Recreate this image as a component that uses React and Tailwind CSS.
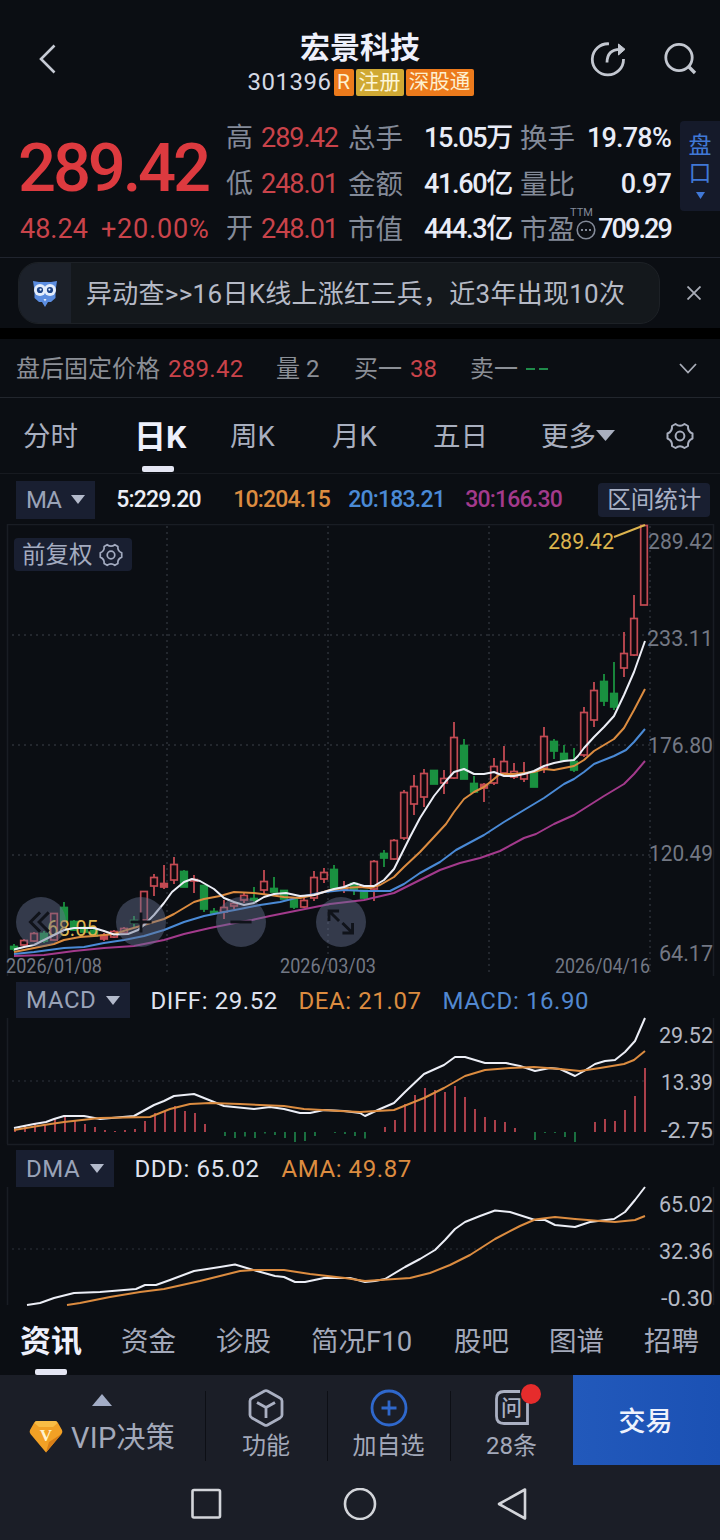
import clsx from "clsx";

// [top, bottom, high, low, direction] in chart pixels, one entry per trading day
const candles = [
  [946, 949, 944, 951, "g"], [940, 945, 939, 946, "r"], [933, 941, 932, 942, "r"],
  [933, 941, 931, 943, "g"], [913, 940, 913, 940, "r"], [907, 921, 902, 922, "g"],
  [921, 930, 920, 931, "g"], [927, 932, 926, 933, "g"], [930, 936, 929, 937, "g"],
  [935, 939, 933, 941, "f"], [931, 937, 930, 938, "r"], [928, 933, 927, 934, "r"],
  [920, 923, 916, 927, "g"], [891, 920, 891, 926, "r"], [877, 886, 874, 896, "r"],
  [883, 887, 865, 889, "f"], [864, 880, 857, 884, "r"], [871, 887, 870, 887, "g"],
  [879, 881, 875, 893, "f"], [885, 909, 885, 912, "g"], [911, 913, 908, 915, "g"],
  [907, 912, 900, 919, "r"], [903, 906, 901, 909, "r"], [895, 900, 892, 903, "r"],
  [898, 900, 887, 902, "g"], [881, 890, 870, 895, "r"], [888, 892, 877, 892, "g"],
  [890, 899, 890, 899, "g"], [899, 907, 899, 909, "g"], [900, 907, 898, 908, "r"],
  [877, 898, 871, 901, "r"], [872, 879, 868, 883, "r"], [869, 888, 865, 889, "g"],
  [888, 890, 881, 893, "f"], [883, 890, 882, 895, "g"], [890, 898, 890, 899, "g"],
  [861, 889, 860, 901, "r"], [853, 858, 850, 867, "g"], [840, 859, 839, 860, "r"],
  [792, 838, 790, 840, "r"], [786, 804, 775, 815, "r"], [773, 797, 769, 807, "r"],
  [770, 784, 770, 784, "g"], [778, 783, 770, 794, "r"], [737, 778, 722, 779, "r"],
  [745, 779, 739, 779, "g"], [783, 792, 776, 792, "g"], [784, 788, 783, 802, "f"],
  [766, 783, 758, 785, "r"], [761, 773, 746, 774, "r"], [771, 777, 763, 779, "r"],
  [773, 779, 762, 782, "r"], [772, 787, 771, 787, "g"], [736, 768, 727, 773, "r"],
  [741, 751, 739, 759, "g"], [753, 760, 745, 762, "g"], [761, 770, 748, 772, "g"],
  [712, 755, 707, 757, "r"], [690, 720, 682, 727, "r"], [681, 701, 674, 706, "g"],
  [693, 707, 662, 710, "g"], [653, 668, 632, 677, "r"], [618, 655, 595, 656, "r"],
  [525, 605, 525, 605, "r"],
];

const ma5 =
  "14,949.5 24,947 34,945 44,940 54,935 64,930 74,928 94,928 104,931 114,934.5 128,934 138,930 144,925 154,915 164,903 172,892 184,882 192,879 200,881 214,889 224,898 234,902 244,905 254,903 264,897 274,894 286,893 300,896 314,895 324,892 334,889 344,887 354,883 364,886 374,886 384,880 394,869 404,849 410,837 420,818 434,796 446,781 454,772 464,769 474,774 484,774 494,772 504,776 514,776 524,774 534,771 544,766 554,763 564,761 574,760 578,756 584,748 594,737 604,727 614,716 624,695 634,672 645,641";
const ma10 =
  "14,952 34,948 54,944 64,940 80,937 94,936 114,934 130,929 144,925 164,919 174,914 184,908 194,902 204,899 220,896 234,892 254,893 270,895 284,897 300,898 314,895 330,890 344,888 360,887 370,888 380,885 394,877 404,867 420,852 434,837 446,824 454,812 464,799 474,792 484,787 494,779 500,774 514,774 534,772 544,769 554,770 564,768 574,766 584,760 594,751 604,745 614,739 624,728 634,710 645,689";
const ma20 =
  "14,954 34,952 64,948 84,947 104,943 124,940 144,936 164,930 184,922 204,916 224,912 240,909 260,905 280,902 300,897 324,892 344,890 364,891 390,891 404,884 420,873 440,862 456,850 484,835 504,822 534,804 544,798 564,784 574,779 584,772 594,764 614,756 626,750 634,742 645,729";
const ma30 =
  "14,956 44,955 74,951 104,948 134,946 164,940 184,934 210,928 240,922 252,920 270,916 300,910 330,904 364,900 394,893 420,880 440,870 460,863 480,858 500,851 524,838 536,834 554,824 574,815 604,796 624,784 634,774 645,761";

const macdBars = [
  2, 6, 8, 7, 13, 15, 11, 8, 5, 2, 1, 2, 3, 11, 19, 21, 26, 21, 19, 8, 0, -4, -6, -4.5,
  -6, -1.5, -3, -6, -10, -9, -4, 0, -1, -2, -4, -6.5, 0, 5, 12, 28, 37, 44, 42, 40, 46,
  35, 23, 15, 12, 10, 4, 0, -8, -1, -1, -5, -10, 0, 10, 13, 11, 22, 36, 64,
];
const diff =
  "14,1128 34,1124 46,1122 54,1119 64,1116 84,1116 100,1119 134,1116 154,1105 164,1101 174,1096 194,1094 204,1098 224,1106 254,1109 270,1107 284,1109 300,1113 310,1113 324,1110 344,1111 360,1113 365,1116 380,1109 394,1103 405,1092 424,1074 444,1065 455,1057 465,1057 485,1063 506,1063 520,1066 535,1071 550,1068 560,1069 575,1076 584,1071 595,1064 605,1061 615,1060 625,1052 635,1041 645,1018";
const dea =
  "14,1130 44,1125 64,1122 100,1118 150,1117 170,1109 190,1104 210,1103 240,1104 284,1106 304,1109 340,1111 360,1112 394,1110 424,1098 444,1088 465,1076 485,1070 510,1068 534,1067 560,1069 580,1071 600,1068 624,1064 634,1060 645,1051";
const ddd =
  "27,1305 40,1303 54,1298 74,1293 100,1292 136,1289 145,1285 156,1285 170,1280 194,1271 220,1267 235,1264.5 250,1269 275,1276 284,1277 295,1282 305,1282 324,1278 350,1278 365,1282 375,1281 385,1279 405,1267 420,1259 435,1250 445,1240 455,1229 465,1222 480,1216 495,1210.5 510,1212 535,1220 545,1220 555,1225 575,1227 590,1222 614,1219 625,1212 635,1200 645,1187";
const ama =
  "67,1305 80,1303 110,1297 140,1292 164,1289 200,1281 240,1271 254,1270 284,1270 310,1274 345,1278 365,1281 380,1280 410,1278 430,1273 450,1265 470,1255 495,1239 520,1226 535,1219.5 555,1217 575,1219 600,1221 615,1222 635,1220 645,1216";

const quotes = [
  ["高", "289.42", "总手", "15.05万", "换手", "19.78%"],
  ["低", "248.01", "金额", "41.60亿", "量比", "0.97"],
  ["开", "248.01", "市值", "444.3亿", "市盈", "709.29"],
];

const Line = ({ points, color }) => (
  <polyline points={points} fill="none" stroke={color} strokeWidth="2" strokeLinejoin="round" />
);

const Label = ({ x, y, w, fill, size = 22, children }) => (
  <text x={x} y={y} fill={fill} fontSize={size} textLength={w} lengthAdjust="spacingAndGlyphs">
    {children}
  </text>
);

const Gear = ({ className }) => (
  <svg className={className} viewBox="0 0 28 28" fill="none" stroke="currentColor" strokeWidth="2" strokeLinejoin="round">
    <path d="M9.5 2Q14 5.5 18.5 2L22 4Q21.5 9.5 26.5 11.5V16.5Q21.5 18.5 22 24L18.5 26Q14 22.5 9.5 26L6 24Q6.5 18.5 1.5 16.5V11.5Q6.5 9.5 6 4Z" />
    <circle cx="14" cy="14" r="4.4" />
  </svg>
);

const Caret = ({ className }) => (
  <svg className={className} viewBox="0 0 14 9" preserveAspectRatio="none" fill="currentColor">
    <path d="M0 0H14L7 9Z" />
  </svg>
);

const Header = () => (
  <header className="flex h-[115px] pt-[30px]">
    <svg className="mt-[13px] ml-[38px] h-8 w-[86px]" viewBox="0 0 86 32" fill="none" stroke="#c6cad4" strokeWidth="2.6">
      <path d="M16.5 2.5L3 16L16.5 29.5" />
    </svg>
    <div className="ml-[123px] flex w-[227px] flex-col items-center">
      <h1 className="h-[36px] pr-px text-[30px] leading-[36px] font-bold text-[#eef0fb]">宏景科技</h1>
      <div className="flex h-8 items-center gap-[2px] text-[21px]">
        <span className="w-[84px] text-[24px] tracking-[0.5px] text-[#d5d9e4]">301396</span>
        <span className="flex h-[27px] w-5 items-center justify-center rounded-[2px] bg-[#ec7a1c] pt-[2px] text-[#fdf0cf]">R</span>
        <span className="flex h-[27px] w-12 items-center justify-center rounded-[2px] bg-[#d0a934] pt-px text-[#fdf6d8]">注册</span>
        <span className="flex h-[27px] w-[68px] items-center justify-center rounded-[2px] bg-[#ec7a1c] pt-px text-[20.5px] text-[#fdf0cf]">深股通</span>
      </div>
    </div>
    <div className="ml-[114px] flex gap-[36px] pt-3 text-[#c3c7d0]">
      <svg className="h-9 w-[38px]" viewBox="0 0 38 36" fill="none" stroke="currentColor" strokeWidth="2.8">
        <path d="M21 1.8A15.6 15.6 0 1 0 35.5 17" />
        <path d="M19 20.5C19 12 23 7.5 32 7.3" />
        <path d="M30.5 2L37 7.3L30.5 13Z" fill="currentColor" strokeWidth="1" strokeLinejoin="round" />
      </svg>
      <svg className="h-9 w-[36px]" viewBox="0 0 36 36" fill="none" stroke="currentColor" strokeWidth="2.8">
        <circle cx="17" cy="15.5" r="13.2" />
        <path d="M26 24L33 31" strokeWidth="3.4" />
      </svg>
    </div>
  </header>
);

const Quote = () => (
  <section className="flex h-[143px] border-b border-[#20242e]">
    <div className="w-[226px] pl-[18px] text-[#dd3a3f]">
      <div className="mt-[20px] h-[70px] text-[67px] leading-[67px] font-medium tracking-[-3.2px]">289.42</div>
      <div className="mt-[8px] flex text-[27px] leading-[32px] text-[#c9434a]">
        <span className="ml-[2px] w-[81px]">48.24</span>
        <span className="tracking-[0.8px]">+20.00%</span>
      </div>
    </div>
    <div className="flex w-[446px] flex-col pt-px">
      {quotes.map(([a, av, b, bv, c, cv], i) => (
        <div key={a} className="grid h-[45.5px] shrink-0 grid-cols-[35px_87px_58px_106px_8px_56px_95px] items-center text-[27px] leading-[45px] whitespace-nowrap text-[#838a98]">
          <span>{a}</span>
          <span className="tracking-[-1px] text-[#c9434a]">{av}</span>
          <span className="text-[27.5px]">{b}</span>
          <span className="text-right font-medium tracking-[-1.3px] text-[#e9ecf7]">{bv}</span>
          <span />
          <span className="relative text-[27.5px]">
            {c}
            {i === 2 && (
              <>
                <span className="absolute top-0 left-[50px] text-[11px] leading-3">TTM</span>
                <svg className="absolute top-[13px] left-[56px] h-5 w-5" viewBox="0 0 20 20" fill="none" stroke="currentColor" strokeWidth="1.6">
                  <circle cx="10" cy="10" r="8.8" />
                  <path d="M5 10h2M9 10h2M13 10h2" strokeWidth="2" />
                </svg>
              </>
            )}
          </span>
          <span className={clsx("flex justify-end font-medium text-[#e9ecf7]", i === 2 ? "tracking-[-1.9px]" : "tracking-[-0.8px]")}>{cv}</span>
        </div>
      ))}
    </div>
    <div className="mt-[6px] ml-2 flex h-[90px] w-10 flex-col items-center rounded-l-sm bg-[#151a2a] pt-[11px] text-[23px] leading-[28px] text-[#4078d6]">
      <span>盘</span>
      <span>口</span>
      <Caret className="mt-[4px] h-[7px] w-[9px]" />
    </div>
  </section>
);

const Notice = () => (
  <section className="box-content flex h-[70px] items-center border-b-[11px] border-black">
    <div className="ml-[18px] flex h-[62px] w-[642px] items-center overflow-hidden rounded-[20px] border border-[#1d2126] bg-[#14181c]">
      <div className="flex h-full w-[52px] items-center justify-center bg-[#1c212a]">
        <svg className="h-[28px] w-[26px]" viewBox="0 0 26 28">
          <path d="M1 2L7 3H19L25 2L23.5 12V19L19 23L16 23L13 28L10 23L7 23L2.5 19V12Z" fill="#5b8de0" />
          <circle cx="8" cy="11" r="6" fill="#e4edfb" />
          <circle cx="18" cy="11" r="6" fill="#e4edfb" />
          <circle cx="8" cy="11" r="3.1" fill="#1d4488" />
          <circle cx="18" cy="11" r="3.1" fill="#1d4488" />
          <circle cx="8.6" cy="10.6" r="1.1" fill="#e4edfb" />
          <circle cx="17.4" cy="10.6" r="1.1" fill="#e4edfb" />
          <path d="M11.5 20L13 22.5L14.5 20Z" fill="#e4edfb" />
        </svg>
      </div>
      <p className="ml-[15px] pt-[2px] text-[26px] tracking-[0.28px] whitespace-nowrap text-[#b6bac6]">异动查&gt;&gt;16日K线上涨红三兵，近3年出现10次</p>
    </div>
    <svg className="ml-[27px] h-[14px] w-[14px]" viewBox="0 0 14 14" stroke="#a9adb8" strokeWidth="1.8">
      <path d="M0.5 0.5L13.5 13.5M13.5 0.5L0.5 13.5" />
    </svg>
  </section>
);

const AfterHours = () => (
  <section className="flex h-[59px] items-center border-b border-[#22262d] pt-px pl-4 text-[24px] whitespace-nowrap text-[#8b8f96]">
    <span className="w-[152px]">盘后固定价格</span>
    <span className="w-[108px] tracking-[0.3px] text-[#c9434a]">289.42</span>
    <span className="w-[78px]">量 2</span>
    <span className="w-[56px]">买一</span>
    <span className="w-[60px] text-[#c9434a]">38</span>
    <span className="w-[56px]">卖一</span>
    <svg className="h-[2px] w-[153px]" viewBox="0 0 153 2" stroke="#1f8a4a" strokeWidth="2">
      <path d="M0 1H9M13 1H22" />
    </svg>
    <svg className="h-[11px] w-[18px]" viewBox="0 0 18 11" fill="none" stroke="#a9adb8" strokeWidth="1.8">
      <path d="M1 1L9 9.5L17 1" />
    </svg>
  </section>
);

const periods = [
  { name: "分时", w: "w-[111px]" },
  { name: "日K", w: "w-[96px]", active: true },
  { name: "周K", w: "w-[102px]" },
  { name: "月K", w: "w-[101px]" },
  { name: "五日", w: "w-[108px]" },
  { name: "更多", w: "w-[55px]" },
];

const Periods = () => (
  <nav className="flex h-[76px] items-center border-b border-[#171a20] pl-[23px] text-[27.5px] whitespace-nowrap text-[#a9afbf]">
    {periods.map((p) => (
      <div key={p.name} className={clsx("relative flex h-full shrink-0 items-center pt-[3px]", p.w, p.active && "text-[32px] font-bold text-[#eef0fb]")}>
        {p.name}
        {p.active && <span className="absolute bottom-[1px] left-2 h-[6px] w-8 rounded-[2px] bg-[#e4e6f3]" />}
      </div>
    ))}
    <Caret className="h-[11px] w-[19px]" />
    <Gear className="ml-[51px] h-[28px] w-[28px]" />
  </nav>
);

const Indicator = ({ name, className, children }) => (
  <div className={clsx("flex items-center whitespace-nowrap", className)}>
    <span className="ml-4 flex h-full items-center gap-[10px] bg-[#191f31] px-[10px] text-[24px] font-normal text-[#99a3b8]">
      {name}
      <Caret className="h-[9px] w-[14px] text-[#b3bacb]" />
    </span>
    {children}
  </div>
);

const grey = "#737884";

const Candles = () => (
  <div className="relative h-[456px]">
    <svg className="h-full w-full" viewBox="0 524 720 456">
      <path d="M7 524.5H714M7.5 524V976M713.5 524V976" stroke="#191d24" strokeWidth="1.5" />
      <path d="M12 635H650M12 745H650M12 855H650M167 526V976M328 526V976M489 526V976M650 526V976" stroke="#2d3139" strokeWidth="1.5" strokeDasharray="2 4" />
      {candles.map(([top, bottom, high, low, dir], i) => {
        const x = 14 + i * 10;
        const color = dir === "g" ? "#1a9140" : "#c24a53";
        return (
          <g key={i} stroke={color}>
            <path d={`M${x} ${high}V${top}M${x} ${bottom}V${low}`} strokeWidth="1.8" />
            <rect
              x={x - 3.3}
              y={top + 0.5}
              width="6.6"
              height={Math.max(bottom - top - 0.5, 1)}
              fill={dir === "r" ? "#10090e" : color}
              strokeWidth="1.7"
            />
          </g>
        );
      })}
      <Label x="47" y="936" w="51" fill="#dcb44e">68.05</Label>
      <Line points={ma30} color="#a33a8c" />
      <Line points={ma20} color="#4a8ad6" />
      <Line points={ma10} color="#dc8c40" />
      <Line points={ma5} color="#eceef6" />
      <path d="M614 537L645 525" stroke="#dcb44e" strokeWidth="2" />
      <Label x="548" y="549" w="66" fill="#dcb44e">289.42</Label>
      <Label x="648" y="549" w="65" fill={grey}>289.42</Label>
      <Label x="647" y="646" w="66" fill={grey}>233.11</Label>
      <Label x="648" y="753" w="65" fill={grey}>176.80</Label>
      <Label x="649" y="861" w="64" fill={grey}>120.49</Label>
      <Label x="659" y="961" w="54" fill={grey}>64.17</Label>
      <Label x="6" y="973" w="96" size={19.5} fill={grey}>2026/01/08</Label>
      <Label x="280" y="973" w="96" size={19.5} fill={grey}>2026/03/03</Label>
      <Label x="555" y="973" w="95" size={19.5} fill={grey}>2026/04/16</Label>
    </svg>
    <div className="absolute top-[14px] left-[14px] flex h-[33px] w-[118px] items-center gap-[6px] rounded bg-[#191f31] pl-[8px] text-[23.5px] whitespace-nowrap text-[#a3abc0]">
      <span className="pt-[3px]">前复权</span>
      <Gear className="h-[24px] w-[24px]" />
    </div>
    <div className="absolute top-[373px] left-4 flex gap-[50px]">
      {[
        "M25 16L15 26L25 36M34 16L24 26L34 36",
        "M15 26H37M26 16V37",
        "M15 26H37",
        "M13.5 25V14.5H24M14 15L24 25M38 27V37.5H27.5M37.5 37L27.5 27",
      ].map((d) => (
        <svg key={d} className="h-[50px] w-[50px]" viewBox="0 0 52 52" fill="none" stroke="#10131a" strokeWidth="3">
          <circle cx="26" cy="26" r="26" fill="#667290" fillOpacity="0.45" stroke="none" />
          <path d={d} />
        </svg>
      ))}
    </div>
  </div>
);

const Macd = () => (
  <svg className="h-[132px] w-full overflow-visible" viewBox="0 1018 720 132">
    <path d="M7 1144.5H714M7.5 1018V1144M713.5 1018V1144" stroke="#191d24" strokeWidth="1.5" />
    <path d="M12 1081H645" stroke="#23272f" strokeWidth="1.5" strokeDasharray="2 4" />
    {macdBars.map((h, i) => (
      <path key={i} d={`M${15 + i * 10} 1132v${-h}`} stroke={h > 0 ? "#bd4652" : "#1c7a46"} strokeWidth="1.8" />
    ))}
    <Line points={diff} color="#eceef6" />
    <Line points={dea} color="#dc8c40" />
    <Label x="659" y="1043" w="54" fill="#b5b9c4">29.52</Label>
    <Label x="661" y="1090" w="52" fill="#b5b9c4">13.39</Label>
    <Label x="661" y="1138" w="52" fill="#b5b9c4">-2.75</Label>
  </svg>
);

const Dma = () => (
  <svg className="h-[121px] w-full overflow-visible" viewBox="0 1187 720 121">
    <path d="M7.5 1187V1305M713.5 1187V1305" stroke="#191d24" strokeWidth="1.5" />
    <path d="M12 1249H650" stroke="#23272f" strokeWidth="1.5" strokeDasharray="2 4" />
    <Line points={ddd} color="#eceef6" />
    <Line points={ama} color="#dc8c40" />
    <Label x="659" y="1212" w="54" fill="#b5b9c4">65.02</Label>
    <Label x="659" y="1259" w="54" fill="#b5b9c4">32.36</Label>
    <Label x="661" y="1306" w="52" fill="#b5b9c4">-0.30</Label>
  </svg>
);

const tabs = [
  { name: "资讯", w: "w-[101px]", active: true },
  { name: "资金", w: "w-[95px]" },
  { name: "诊股", w: "w-[95px]" },
  { name: "简况F10", w: "w-[143px]" },
  { name: "股吧", w: "w-[95px]" },
  { name: "图谱", w: "w-[95px]" },
  { name: "招聘", w: "w-[70px]" },
];

const Tabs = () => (
  <nav className="flex h-[67px] pl-5 text-[27.5px] leading-[68px] whitespace-nowrap text-[#a3a9ba]">
    {tabs.map((t) => (
      <div key={t.name} className={clsx("relative shrink-0", t.w, t.active && "text-[31px] font-bold text-[#eef0fb]")}>
        {t.name}
        {t.active && <span className="absolute bottom-0 left-[15px] h-[6px] w-8 rounded-[2px] bg-[#e4e6f3]" />}
      </div>
    ))}
  </nav>
);

const Action = ({ label, w, children }) => (
  <div className={clsx("relative flex h-full flex-col items-center pt-[14px]", w)}>
    <span className="absolute top-4 left-0 h-[70px] w-px bg-[#0d0f15]" />
    {children}
    <span className="mt-[2px] text-[24px] leading-[34px] text-[#a3a9ba]">{label}</span>
  </div>
);

const BottomBar = () => (
  <footer className="flex h-[91px] bg-[#1b1e27]">
    <div className="flex w-[205px] flex-col">
      <Caret className="mt-[19px] ml-[92px] h-3 w-5 rotate-180 text-[#a3adc6]" />
      <div className="mt-[6px] flex items-center pl-[29px] text-[29px] leading-[44px] tracking-[0.3px] text-[#a3a9ba]">
        <svg className="mr-2 h-[33px] w-[34px]" viewBox="0 0 34 33">
          <path d="M8 1H26Q28 1 29 3L33 10Q34 12 32.5 14L17 32.5L1.5 14Q0 12 1 10L5 3Q6 1 8 1Z" fill="#f2a125" />
          <path d="M8 1H26Q28 1 28.5 3L24 7H10L5.5 3Q6 1 8 1Z" fill="#f9bd45" />
          <path d="M32.5 14L17 32.5L20 22Z" fill="#d97f17" />
          <text x="17" y="21" fill="#fff4d0" fontSize="17" fontWeight="bold" textAnchor="middle" fontFamily="Liberation Serif, serif">V</text>
        </svg>
        <span className="pt-[4px]">VIP决策</span>
      </div>
    </div>
    <Action label="功能" w="w-[122px]">
      <svg className="h-[38px] w-[36px]" viewBox="0 0 36 38" fill="none" stroke="#aab0c2" strokeWidth="2.8" strokeLinejoin="round">
        <path d="M16.5 2Q18 1.2 19.5 2L32 9Q34 10 34 12V26Q34 28 32 29L19.5 36Q18 36.8 16.5 36L4 29Q2 28 2 26V12Q2 10 4 9Z" />
        <path d="M9 13.5L18 18.5L27 13.5M18 18.5V29" />
      </svg>
    </Action>
    <Action label="加自选" w="w-[123px]">
      <svg className="h-[38px] w-[38px]" viewBox="0 0 38 38" fill="none" stroke="#2f68cc" strokeWidth="2.8">
        <circle cx="19" cy="19" r="17" />
        <path d="M11.5 19H26.5M19 11.5V26.5" />
      </svg>
    </Action>
    <Action label="28条" w="w-[123px]">
      <svg className="h-[38px] w-[36px]" viewBox="0 0 36 38" fill="none" stroke="#aab0c2" strokeWidth="2.8">
        <path d="M26 2.5H10Q2.5 2.5 2.5 10V27Q2.5 34.5 10 34.5H33.5V14" />
      </svg>
      <span className="absolute top-[20px] left-[51px] text-[21px] leading-[26px] font-medium text-[#aab0c2]">问</span>
      <span className="absolute top-[9px] left-[71px] h-5 w-5 rounded-full bg-[#e62c2c]" />
    </Action>
    <div className="flex h-[90px] w-[147px] items-center justify-center bg-gradient-to-r from-[#2259bb] to-[#1b51b4] pt-[4px] pr-[2px] text-[27px] font-medium text-[#eef2fc]">交易</div>
  </footer>
);

const SystemBar = () => (
  <div className="flex h-[74px] items-start bg-[#1b1e27] pt-[22px]">
    <svg className="h-8 w-full" viewBox="0 0 720 32" fill="none" stroke="#d3d5da" strokeWidth="2.6" strokeLinejoin="round">
      <rect x="192.5" y="2" width="27.5" height="27.5" rx="1.5" />
      <circle cx="360" cy="16" r="15" />
      <path d="M525 1.5V30.5L499 16Z" />
    </svg>
  </div>
);

const App = () => {
  return (
    <main className="h-[1540px] w-[720px] overflow-hidden bg-[#0b0e13] font-['Roboto','Noto_Sans_CJK_SC',sans-serif]">
      <Header />
      <Quote />
      <Notice />
      <AfterHours />
      <Periods />
      <div className="flex h-[50px] items-center pt-px">
        <Indicator name="MA" className="h-[38px] w-full text-[23px] font-medium tracking-[-0.8px]">
          <span className="ml-[21px] w-[117px] pt-[2px] text-[#eceef6]">5:229.20</span>
          <span className="w-[115px] pt-[2px] text-[#dc8c40]">10:204.15</span>
          <span className="w-[117px] pt-[2px] text-[#4a8ad6]">20:183.21</span>
          <span className="w-[133px] pt-[2px] text-[#a33a8c]">30:166.30</span>
          <span className="flex h-[34px] w-[112px] items-center justify-center rounded bg-[#191f31] pt-[3px] text-[23.5px] font-normal tracking-normal text-[#a9b1c6]">区间统计</span>
        </Indicator>
      </div>
      <Candles />
      <Indicator name="MACD" className="mt-[2px] h-[36px] text-[24px] tracking-[0.6px]">
        <span className="ml-5 w-[148px] pt-px text-[#dfe2ee]">DIFF: 29.52</span>
        <span className="w-[144px] pt-px text-[#dc8c40]">DEA: 21.07</span>
        <span className="pt-px text-[#5288d0]">MACD: 16.90</span>
      </Indicator>
      <Macd />
      <Indicator name="DMA" className="h-[37px] text-[24px] tracking-[0.6px]">
        <span className="ml-5 w-[147px] text-[#dfe2ee]">DDD: 65.02</span>
        <span className="text-[#dc8c40]">AMA: 49.87</span>
      </Indicator>
      <Dma />
      <Tabs />
      <BottomBar />
      <SystemBar />
    </main>
  );
};

export default App;
